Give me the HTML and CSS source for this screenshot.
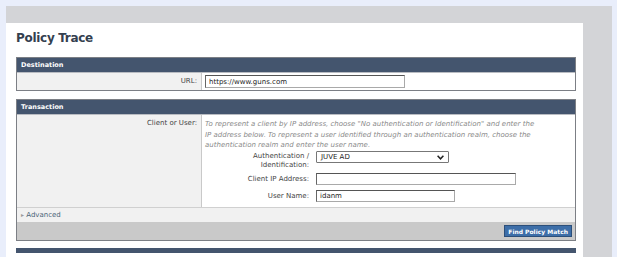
FILE: index.html
```html
<!DOCTYPE html>
<html lang="en">
<head>
  <meta charset="UTF-8" />
  <title>Policy Trace</title>
  <link rel="stylesheet" href="styles.css">
</head>
<body>
  <div class="frame">
    <div class="page">
      <h1>Policy Trace</h1>

      <div class="panel">
        <div class="panel-head">Destination</div>
        <div class="row">
          <div class="row-label">URL:</div>
          <div class="row-field short">
            <input type="text" class="url" value="https://www.guns.com">
          </div>
        </div>
      </div>

      <div class="panel">
        <div class="panel-head">Transaction</div>
        <div class="row">
          <div class="row-label">Client or User:</div>
          <div class="row-field">
            <p class="hint">To represent a client by IP address, choose "No authentication or Identification" and enter the IP address below. To represent a user identified through an authentication realm, choose the authentication realm and enter the user name.</p>
            <div class="sub first">
              <label class="sub-label" for="realm">Authentication /<br>Identification:</label>
              <div class="select" id="realm">JUVE AD
                <svg class="chev" width="7" height="5" viewBox="0 0 7 5"><path d="M0.6 0.8 L3.5 3.8 L6.4 0.8" fill="none" stroke="#222" stroke-width="1.5"/></svg>
              </div>
            </div>
            <div class="sub">
              <label class="sub-label" for="ip">Client IP Address:</label>
              <input type="text" id="ip" class="ip" value="">
            </div>
            <div class="sub">
              <label class="sub-label" for="user">User Name:</label>
              <input type="text" id="user" class="user" value="idanm">
            </div>
          </div>
        </div>
        <div class="advanced"><span class="arrow">&#9656;</span> Advanced</div>
        <div class="actions">
          <button type="button" class="button">Find Policy Match</button>
        </div>
      </div>

      <div class="panel next"></div>
    </div>
  </div>
</body>
</html>
```

FILE: styles.css
```css
body {
  margin: 0;
  background-color: #e9eefb;
  font-family: 'DejaVu Sans', Verdana, sans-serif;
  font-size: 7px;
  color: #333;
  height: 257px;
  overflow: hidden;
}
.frame {
  margin: 6px 5px 0 6px;
  width: 577px;
  padding: 17px 29px 0 0;
  background-color: #d3d4d7;
  height: 240px;
}
.page {
  background-color: #fff;
  height: 240px;
  padding: 1px 7px 0 10px;
}
h1 {
  margin: 7px 0 12px 0;
  font-size: 12px;
  font-weight: bold;
  color: #34404f;
  letter-spacing: -0.3px;
}
.panel {
  width: 558px;
  border: 1px solid #7c7f85;
  margin-bottom: 8px;
}
.panel-head {
  background-color: #44556e;
  color: #fff;
  font-weight: bold;
  height: 14px;
  line-height: 14px;
  padding-left: 4px;
  font-size: 6.5px;
}
.row {
  display: flex;
  border-top: 1px solid #b9bcc2;
}
.row-label {
  width: 180px;
  padding: 4px 4px 0 0;
  text-align: right;
  background-color: #f1f1f1;
  border-right: 1px solid #c9c9c9;
  color: #444;
}
.row-field {
  flex: 1;
  padding: 2px 0 5px 3px;
}
.row-field.short {
  padding-bottom: 2px;
}
.url {
  width: 200px;
}
input[type="text"], .select {
  display: block;
  box-sizing: border-box;
  height: 12px;
  margin: 0;
  padding: 0 3px;
  font-family: inherit;
  font-size: 7px;
  color: #222;
  border: 1px solid #a9a9a9;
  border-top-color: #555;
  border-left-color: #666;
  background-color: #fff;
}
input.url {
  height: 13px;
}
.hint {
  margin: 2px 0 0.5px 0;
  font-style: italic;
  color: #8a8a8a;
  line-height: 10.5px;
  width: 334px;
}
.sub {
  display: flex;
  align-items: center;
  margin-bottom: 5px;
}
.sub.first {
  align-items: flex-start;
  margin-bottom: 3px;
}
.sub:last-child {
  margin-bottom: 0;
}
.sub-label {
  width: 104px;
  padding-right: 7px;
  text-align: right;
  color: #444;
  line-height: 9px;
}
.sub.first .sub-label {
  padding-top: 1px;
}
.select {
  width: 133px;
  display: flex;
  align-items: center;
  justify-content: space-between;
  border: 1px solid #777;
  border-radius: 1px;
  padding: 0 4px;
}
.ip {
  width: 200px;
}
.user {
  width: 139px;
}
.advanced {
  background-color: #f1f1f1;
  border-top: 1px solid #d0d0d0;
  height: 14px;
  line-height: 14px;
  padding-left: 4px;
  color: #4a6378;
}
.arrow {
  color: #999;
  font-size: 6px;
}
.actions {
  background-color: #c9c9c9;
  height: 18px;
  display: flex;
  align-items: center;
  justify-content: flex-end;
  padding-right: 3px;
}
.button {
  background-color: #3d6ea8;
  color: #fff;
  font-family: inherit;
  font-size: 6px;
  font-weight: bold;
  border: 1px solid #2c4f7a;
  height: 12px;
  padding: 0 3px;
  margin: 0;
}
.next {
  height: 3px;
  margin-top: -1px;
  background-color: #44556e;
  border-color: #44556e;
}
```
